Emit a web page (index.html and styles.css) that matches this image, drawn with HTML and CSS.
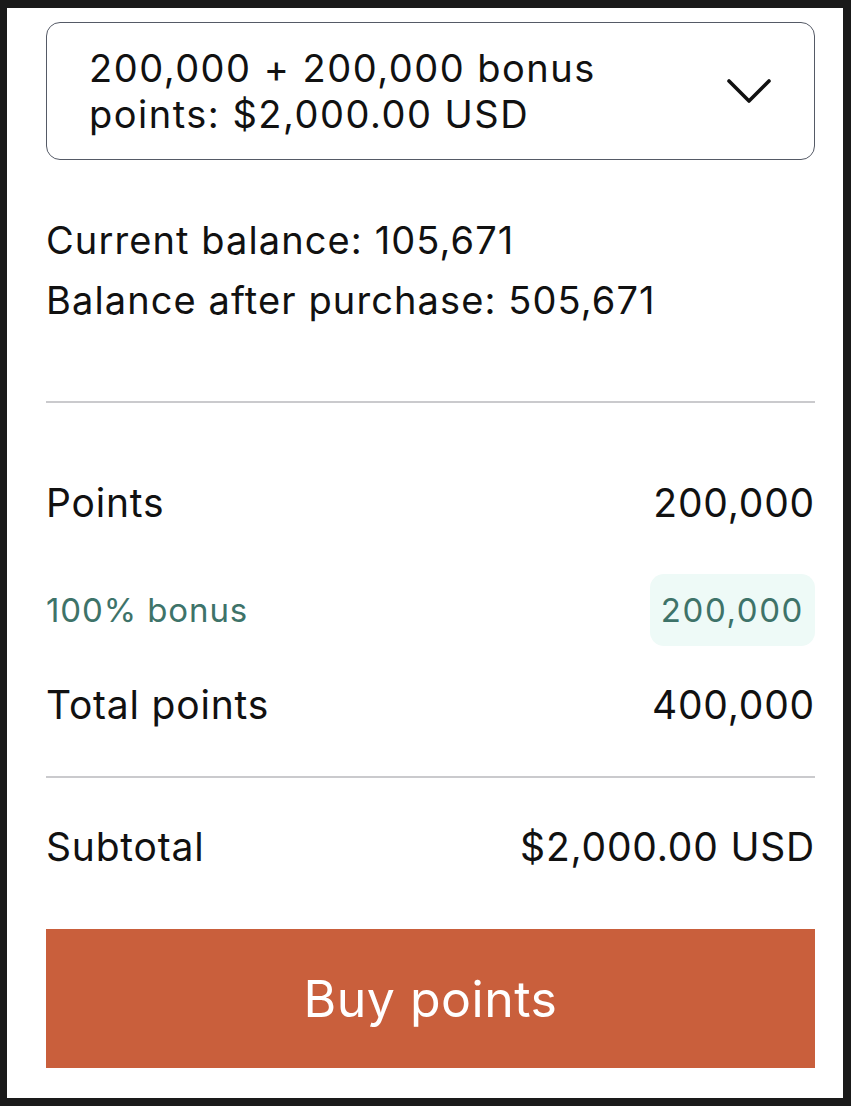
FILE: index.html
```html
<!DOCTYPE html>
<html lang="en">
<head>
  <meta charset="UTF-8" />
  <title>Buy points</title>
  <link rel="stylesheet" href="styles.css">
</head>
<body>
  <div class="panel">

    <!-- Package picker -->
    <div class="picker">
      <span class="picker-text">200,000 + 200,000 bonus points: $2,000.00 USD</span>
      <svg class="chevron" width="46" height="26" viewBox="0 0 46 26">
        <path d="M3 3 L23 23 L43 3" fill="none" stroke="#111" stroke-width="3.6" stroke-linecap="round" stroke-linejoin="round"/>
      </svg>
    </div>

    <div class="balance">
      <div>Current balance: 105,671</div>
      <div>Balance after purchase: 505,671</div>
    </div>

    <hr class="divider">

    <div class="summary">
      <div class="row">
        <span>Points</span>
        <span>200,000</span>
      </div>
      <div class="row bonus">
        <span>100% bonus</span>
        <span class="pill">200,000</span>
      </div>
      <div class="row">
        <span>Total points</span>
        <span>400,000</span>
      </div>
    </div>

    <hr class="divider">

    <div class="row subtotal">
      <span>Subtotal</span>
      <span>$2,000.00 USD</span>
    </div>

    <button class="buy-btn">Buy points</button>
  </div>
</body>
</html>
```

FILE: styles.css
```css
body {
  margin: 0;
  background: #1a1a1a;
  font-family: Inter, "Liberation Sans", sans-serif;
  color: #111;
}

.panel {
  background: #fff;
  margin: 8px 8px 8px 7px;
  height: 1090px;
  padding: 14px 28px 0 39px;
  box-sizing: border-box;
}

.picker {
  display: flex;
  align-items: center;
  justify-content: space-between;
  border: 1.5px solid #555a66;
  border-radius: 14px;
  padding: 22px 42px 22px 42px;
}

.picker-text {
  font-size: 38px;
  line-height: 46px;
  letter-spacing: 1.5px;
  max-width: 560px;
}

.chevron {
  flex-shrink: 0;
}

.balance {
  margin-top: 50px;
  font-size: 38px;
  line-height: 60px;
  letter-spacing: 1.1px;
  padding-bottom: 71px;
}

.divider {
  border: none;
  border-top: 2px solid #cacacd;
  margin: 0;
}

.summary {
  padding-top: 70px;
  padding-bottom: 41px;
}

.row {
  display: flex;
  justify-content: space-between;
  align-items: center;
  font-size: 39px;
  line-height: 60px;
  letter-spacing: 0.8px;
}

.row.bonus {
  font-size: 33px;
  letter-spacing: 0.9px;
  color: #3e7369;
  margin: 41px 0 29px;
}

.pill {
  background: #eefaf7;
  border-radius: 14px;
  padding: 6px 11px;
  letter-spacing: 1.6px;
}

.subtotal {
  margin-top: 39px;
}

.buy-btn {
  display: block;
  width: 100%;
  margin-top: 52px;
  height: 139px;
  border: none;
  background: #c95f3c;
  color: #fff;
  font-family: inherit;
  font-size: 50px;
  letter-spacing: 0.5px;
  cursor: pointer;
}
```
